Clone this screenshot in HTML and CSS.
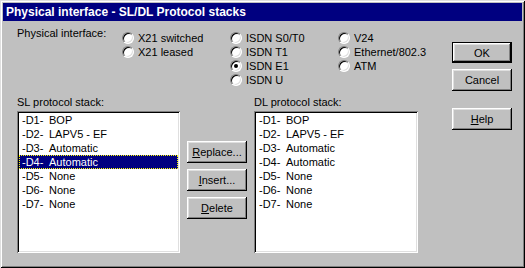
FILE: index.html
```html
<!DOCTYPE html>
<html lang="en">

<head>
    <meta charset="UTF-8">
    <title>Physical interface - SL/DL Protocol stacks</title>
    <link rel="stylesheet" href="styles.css">
</head>

<body>
    <div class="window">
        <div class="titlebar">Physical interface - SL/DL Protocol stacks</div>
        <div class="client">
            <div class="main">
                <div class="iface">
                    <div class="iface-label">Physical interface:</div>
                    <div class="radios">
                        <div class="radio-col">
                            <div class="radio-row"><span class="radio"></span>X21 switched</div>
                            <div class="radio-row"><span class="radio"></span>X21 leased</div>
                        </div>
                        <div class="radio-col">
                            <div class="radio-row"><span class="radio"></span>ISDN S0/T0</div>
                            <div class="radio-row"><span class="radio"></span>ISDN T1</div>
                            <div class="radio-row"><span class="radio checked"></span>ISDN E1</div>
                            <div class="radio-row"><span class="radio"></span>ISDN U</div>
                        </div>
                        <div class="radio-col">
                            <div class="radio-row"><span class="radio"></span>V24</div>
                            <div class="radio-row"><span class="radio"></span>Ethernet/802.3</div>
                            <div class="radio-row"><span class="radio"></span>ATM</div>
                        </div>
                    </div>
                </div>

                <div class="stacks">
                    <div class="stack sl">
                        <div class="stack-label">SL protocol stack:</div>
                        <ul class="listbox">
                            <li><span class="code">-D1-</span>BOP</li>
                            <li><span class="code">-D2-</span>LAPV5 - EF</li>
                            <li><span class="code">-D3-</span>Automatic</li>
                            <li class="selected"><span class="code">-D4-</span>Automatic</li>
                            <li><span class="code">-D5-</span>None</li>
                            <li><span class="code">-D6-</span>None</li>
                            <li><span class="code">-D7-</span>None</li>
                        </ul>
                    </div>
                    <div class="stack-actions">
                        <button class="btn"><u>R</u>eplace...</button>
                        <button class="btn"><u>I</u>nsert...</button>
                        <button class="btn"><u>D</u>elete</button>
                    </div>
                    <div class="stack dl">
                        <div class="stack-label">DL protocol stack:</div>
                        <ul class="listbox">
                            <li><span class="code">-D1-</span>BOP</li>
                            <li><span class="code">-D2-</span>LAPV5 - EF</li>
                            <li><span class="code">-D3-</span>Automatic</li>
                            <li><span class="code">-D4-</span>Automatic</li>
                            <li><span class="code">-D5-</span>None</li>
                            <li><span class="code">-D6-</span>None</li>
                            <li><span class="code">-D7-</span>None</li>
                        </ul>
                    </div>
                </div>
            </div>

            <div class="side">
                <button class="btn default">OK</button>
                <button class="btn cancel">Cancel</button>
                <button class="btn help"><u>H</u>elp</button>
            </div>
        </div>
    </div>
</body>

</html>
```

FILE: styles.css
```css
html, body {
    margin: 0;
    padding: 0;
    background: #c0c0c0;
    overflow: hidden;
}

body {
    font-family: "Liberation Sans", Arial, sans-serif;
    font-size: 11px;
    color: #000;
}

/* window frame */
.window {
    width: 525px;
    height: 268px;
    box-sizing: border-box;
    padding: 3px;
    background: #c0c0c0;
    box-shadow: inset 1px 1px #dfdfdf, inset -1px -1px #000,
                inset 2px 2px #fff, inset -2px -2px #808080;
    display: flex;
    flex-direction: column;
}

.titlebar {
    height: 18px;
    line-height: 18px;
    background: #000080;
    color: #fff;
    font-weight: bold;
    font-size: 12px;
    padding-left: 3px;
    white-space: nowrap;
}

.client {
    display: flex;
    flex: 1;
}

.main {
    padding-left: 14px;
    width: 401px;
    flex: none;
}

/* physical interface radios */
.iface {
    display: flex;
    align-items: flex-start;
    padding-top: 6px;
}

.iface-label {
    width: 105px;
    flex: none;
    line-height: 13px;
    white-space: nowrap;
}

.radios {
    display: flex;
    flex: none;
    padding-top: 4px;
}

.radio-col {
    width: 108px;
    flex: none;
}

.radio-row {
    height: 14px;
    display: flex;
    align-items: center;
    gap: 4px;
    white-space: nowrap;
}

.radio {
    width: 10px;
    height: 10px;
    border-radius: 50%;
    background: #fff;
    border: 1px solid;
    border-color: #808080 #fff #fff #808080;
    box-shadow: inset 1px 1px #000, inset -1px -1px #dfdfdf;
    position: relative;
    flex: none;
}

.radio.checked::after {
    content: "";
    position: absolute;
    left: 3px;
    top: 3px;
    width: 4px;
    height: 4px;
    border-radius: 50%;
    background: #000;
}

/* protocol stacks */
.stacks {
    display: flex;
    margin-top: 9px;
}

.stack-label {
    line-height: 13px;
    margin-bottom: 2px;
}

.sl {
    width: 164px;
}

.dl {
    width: 165px;
}

.listbox {
    list-style: none;
    margin: 0;
    padding: 2px;
    height: 142px;
    box-sizing: border-box;
    background: #fff;
    box-shadow: inset 1px 1px #808080, inset -1px -1px #fff,
                inset 2px 2px #000, inset -2px -2px #dfdfdf;
}

.listbox li {
    height: 14px;
    line-height: 14px;
    padding-left: 3px;
    white-space: nowrap;
    box-sizing: border-box;
}

.listbox .code {
    display: inline-block;
    width: 27px;
}

.listbox li.selected {
    background: #000080;
    color: #fff;
    border: 1px dotted #ffff00;
    padding-left: 2px;
    line-height: 12px;
}

.stack-actions {
    display: flex;
    flex-direction: column;
    gap: 6px;
    padding: 45px 7px 0;
}

/* buttons */
.btn {
    width: 60px;
    height: 22px;
    padding: 0;
    border: none;
    background: #c0c0c0;
    font-family: "Liberation Sans", Arial, sans-serif;
    font-size: 11px;
    color: #000;
    box-shadow: inset -1px -1px #000, inset 1px 1px #fff,
                inset -2px -2px #808080, inset 2px 2px #dfdfdf;
}

.btn u {
    text-decoration: underline;
}

.side {
    display: flex;
    flex-direction: column;
    padding: 21px 0 0 34px;
}

.btn.default {
    border: 1px solid #000;
    height: 21px;
}

.btn.cancel {
    margin-top: 6px;
}

.btn.help {
    margin-top: 17px;
}
```
